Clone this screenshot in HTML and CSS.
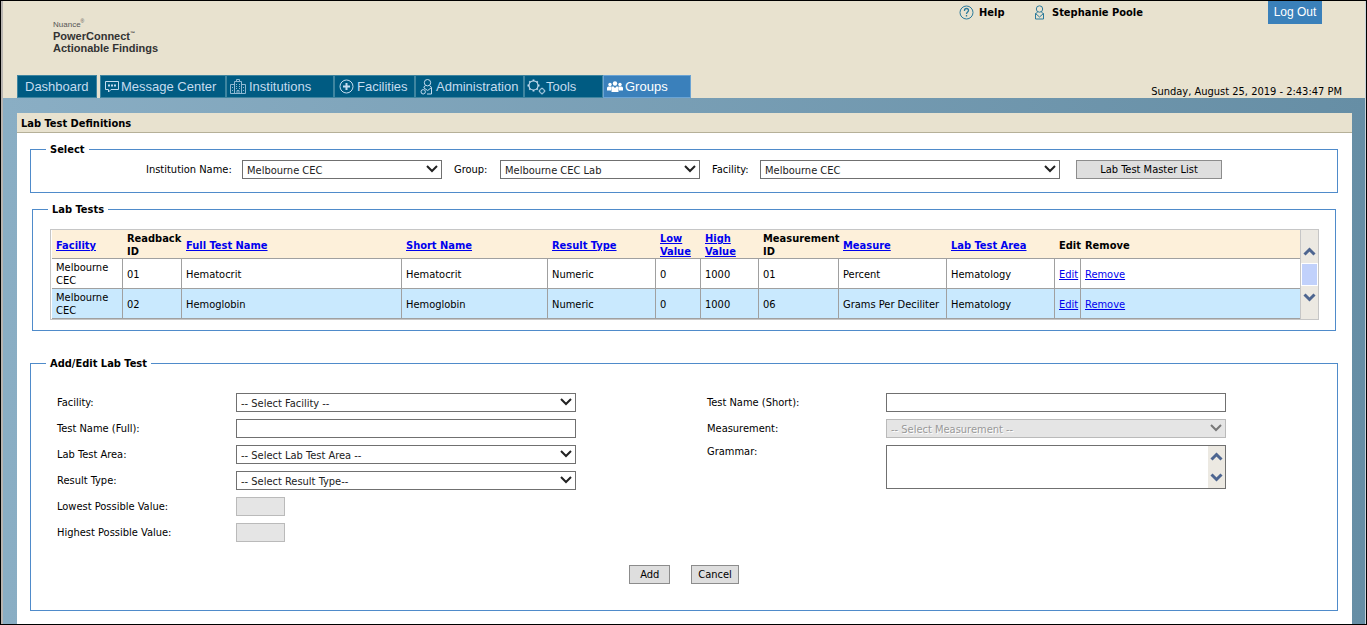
FILE: index.html
```html
<!DOCTYPE html>
<html lang="en">
<head>
<meta charset="utf-8">
<title>Lab Test Definitions</title>
<link rel="stylesheet" href="styles.css">
</head>
<body>
<div class="page">
  <header class="header">
    <div class="topbar">
      <div class="logo">
        <span class="logo-brand">Nuance<sup>®</sup></span>
        <span class="logo-name">PowerConnect<sup>™</sup></span>
        <span class="logo-name">Actionable Findings</span>
      </div>
      <div class="account">
        <a class="account-link account-help" href="#">
          <svg width="15" height="15" viewBox="0 0 15 15" fill="none" stroke="#2b7a9b"><circle cx="7.500" cy="7.500" r="6.500"/><path d="M5.500 6V5.500a2 2 0 0 1 4 0C9.500 7 7.500 7 7.500 9M7.500 10v1.500" stroke-width="1.300"/></svg>
          Help
        </a>
        <a class="account-link account-user" href="#">
          <svg width="11" height="15" viewBox="0 0 11 15" fill="none" stroke="#2b7a9b"><circle cx="5.500" cy="4" r="3.200"/><path d="M3.500 7.500 1.500 8.500v5.500h8V8.500l-2-1M1.500 8.500l4 3.500 4-3.500"/></svg>
          Stephanie Poole
        </a>
        <button class="logout" type="button">Log Out</button>
      </div>
    </div>
    <div class="navbar">
      <nav class="tabs">
        <a class="tab tab-dashboard" href="#">Dashboard</a>
        <a class="tab tab-messages" href="#">
          <svg width="15" height="13" viewBox="0 0 15 13" fill="none" stroke="currentColor"><path d="M.5 1.500h13v8H6l-2.500 2.500V9.500h-3z"/><path d="M3 5.500h2M6 5.500h2M9 5.500h2" stroke-width="1.800"/></svg>
          Message Center</a>
        <a class="tab tab-institutions" href="#">
          <svg width="16" height="15" viewBox="0 0 16 15" fill="none" stroke="#8fb9d2"><path d="M4.500 14.500v-12h7v12M6.500 2.500v-2h3v2M4.500 5.500h-4v9h15v-9h-4M7 14.500v-3h2v3M6 5.500h1M9 5.500h1M6 7.500h1M9 7.500h1M6 9.500h1M9 9.500h1M2 8.500h1M2 11.500h1M13 8.500h1M13 11.500h1"/></svg>
          Institutions</a>
        <a class="tab tab-facilities" href="#">
          <svg width="15" height="15" viewBox="0 0 15 15" fill="none" stroke="currentColor"><circle cx="7.500" cy="7.500" r="6.500"/><path d="M7.500 4v7M4 7.500h7" stroke-width="2"/></svg>
          Facilities</a>
        <a class="tab tab-admin" href="#">
          <svg width="13" height="16" viewBox="0 0 13 16" fill="none" stroke="currentColor"><circle cx="7.500" cy="3.700" r="3.200"/><path d="M5.500 6.700 4 7.700v1.300l3.700 2.500 3.800-3v6.500H7M9.500 6.700l2 1.500"/><circle cx="3.200" cy="12.800" r="2.200"/></svg>
          Administration</a>
        <a class="tab tab-tools" href="#">
          <svg width="19" height="16" viewBox="0 0 19 16" fill="none" stroke="currentColor"><circle cx="6.500" cy="6.500" r="4.500" stroke-width="1.200"/><path d="M6.500 .5V2M6.500 11v1.500M.5 6.500H2M11 6.500h1.500M2.300 2.300l1 1M9.700 9.700l1 1M2.300 10.700l1-1M9.700 3.300l1-1" stroke-width="1.800"/><circle cx="15" cy="12" r="2.400"/><path d="M15 8.700v1M15 14.500v1M11.700 12h1M17.400 12h1"/></svg>
          Tools</a>
        <a class="tab tab-groups tab-active" href="#" aria-current="page">
          <svg width="16" height="12" viewBox="0 0 16 12" fill="currentColor"><circle cx="3" cy="3.500" r="1.700"/><circle cx="13" cy="3.500" r="1.700"/><circle cx="8" cy="2.500" r="2.200"/><path d="M0 9.500V7q0-1.500 1.500-1.500h3L4 9.500zM16 9.500V7q0-1.500-1.500-1.500h-3l.5 4zM4.500 11V7q0-1.700 1.700-1.700L8 7l1.800-1.700q1.700 0 1.700 1.700v4z"/></svg>
          Groups</a>
      </nav>
      <time class="clock" datetime="2019-08-25T14:43:47">Sunday, August 25, 2019 - 2:43:47 PM</time>
    </div>
  </header>

  <main class="stage">
    <div class="panel">
      <h1 class="panel-title">Lab Test Definitions</h1>
      <div class="panel-body">
        <fieldset class="group group-select">
          <legend>Select</legend>
          <div class="filters">
            <label class="filter-label label-institution" for="institution">Institution Name:</label>
            <select class="control select filter-control" id="institution"><option>Melbourne CEC</option></select>
            <label class="filter-label label-group" for="group">Group:</label>
            <select class="control select filter-control" id="group"><option>Melbourne CEC Lab</option></select>
            <label class="filter-label label-facility" for="facility">Facility:</label>
            <select class="control select filter-control filter-wide" id="facility"><option>Melbourne CEC</option></select>
            <button class="button button-master" type="button">Lab Test Master List</button>
          </div>
        </fieldset>

        <fieldset class="group group-tests">
          <legend>Lab Tests</legend>
          <div class="table-box">
            <div class="table-area">
              <table class="tests">
                <colgroup>
                  <col class="col-facility"><col class="col-readback"><col class="col-full"><col class="col-short"><col class="col-type"><col class="col-low"><col class="col-high"><col class="col-mid"><col class="col-measure"><col class="col-area"><col class="col-edit"><col>
                </colgroup>
                <thead>
                  <tr>
                    <th><a href="#">Facility</a></th>
                    <th>Readback<br>ID</th>
                    <th><a href="#">Full Test Name</a></th>
                    <th><a href="#">Short Name</a></th>
                    <th><a href="#">Result Type</a></th>
                    <th><a href="#">Low<br>Value</a></th>
                    <th><a href="#">High<br>Value</a></th>
                    <th>Measurement<br>ID</th>
                    <th><a href="#">Measure</a></th>
                    <th><a href="#">Lab Test Area</a></th>
                    <th>Edit</th>
                    <th>Remove</th>
                  </tr>
                </thead>
                <tbody>
                  <tr>
                    <td>Melbourne<br>CEC</td><td>01</td><td>Hematocrit</td><td>Hematocrit</td><td>Numeric</td><td>0</td><td>1000</td><td>01</td><td>Percent</td><td>Hematology</td><td><a href="#">Edit</a></td><td><a href="#">Remove</a></td>
                  </tr>
                  <tr>
                    <td>Melbourne<br>CEC</td><td>02</td><td>Hemoglobin</td><td>Hemoglobin</td><td>Numeric</td><td>0</td><td>1000</td><td>06</td><td>Grams Per Deciliter</td><td>Hematology</td><td><a href="#">Edit</a></td><td><a href="#">Remove</a></td>
                  </tr>
                </tbody>
              </table>
            </div>
            <div class="scroll scroll-table">
              <svg width="14" height="9" viewBox="0 0 14 9" fill="none" stroke="#4d6590" stroke-width="3"><path d="m1.500 7.500 5-5 5 5"/></svg>
              <span class="scroll-thumb"></span>
              <svg width="14" height="9" viewBox="0 0 14 9" fill="none" stroke="#4d6590" stroke-width="3"><path d="m1.500 1.500 5 5 5-5"/></svg>
            </div>
          </div>
        </fieldset>

        <fieldset class="group group-edit">
          <legend>Add/Edit Lab Test</legend>
          <form class="edit-form">
            <div class="columns">
              <div class="fields">
                <label for="f-facility">Facility:</label>
                <select class="control select" id="f-facility"><option>-- Select Facility --</option></select>
                <label for="f-full">Test Name (Full):</label>
                <input class="control" id="f-full" type="text">
                <label for="f-area">Lab Test Area:</label>
                <select class="control select" id="f-area"><option>-- Select Lab Test Area --</option></select>
                <label for="f-type">Result Type:</label>
                <select class="control select" id="f-type"><option>-- Select Result Type--</option></select>
                <label for="f-low">Lowest Possible Value:</label>
                <input class="control control-small" id="f-low" type="text" disabled>
                <label for="f-high">Highest Possible Value:</label>
                <input class="control control-small" id="f-high" type="text" disabled>
              </div>
              <div class="fields">
                <label for="f-short">Test Name (Short):</label>
                <input class="control" id="f-short" type="text">
                <label for="f-measure">Measurement:</label>
                <select class="control select" id="f-measure" disabled><option>-- Select Measurement --</option></select>
                <label class="label-top" for="f-grammar">Grammar:</label>
                <div class="grammar">
                  <textarea class="grammar-text" id="f-grammar"></textarea>
                  <div class="scroll">
                    <svg width="14" height="9" viewBox="0 0 14 9" fill="none" stroke="#4d6590" stroke-width="3"><path d="m1.500 7.500 5-5 5 5"/></svg>
                    <svg width="14" height="9" viewBox="0 0 14 9" fill="none" stroke="#4d6590" stroke-width="3"><path d="m1.500 1.500 5 5 5-5"/></svg>
                  </div>
                </div>
              </div>
            </div>
            <div class="actions">
              <button class="button" type="button">Add</button>
              <button class="button button-cancel" type="button">Cancel</button>
            </div>
          </form>
        </fieldset>
      </div>
    </div>
  </main>
</div>
</body>
</html>
```
FILE: styles.css
```css
* {
  box-sizing: border-box;
}

body {
  margin: 0;
  color: #000;
  font: 11px/13px "DejaVu Sans Condensed", "Noto Sans", sans-serif;
}

button, input, select, textarea {
  font: inherit;
  color: inherit;
}

a {
  color: #0000ee;
}

.page {
  display: flex;
  flex-direction: column;
  min-height: 100vh;
  border: 1px solid #000;
}

.header {
  display: flex;
  flex-direction: column;
  justify-content: space-between;
  min-height: 97px;
  border-left: 2px solid #b9b5b1;
  border-right: 1px solid #c9d3da;
  background: #e8e2cf;
}

.topbar, .navbar {
  display: flex;
  justify-content: space-between;
}

.logo {
  display: flex;
  flex-direction: column;
  padding: 18px 0 0 50px;
  color: #333;
  font-family: "Liberation Sans", Arial, sans-serif;
}

.logo sup {
  font-size: 5px;
  line-height: 1px;
}

.logo-brand {
  font-size: 8px;
  line-height: 11px;
  color: #555;
}

.logo-name {
  font-size: 11px;
  font-weight: bold;
  line-height: 12px;
}

.account {
  display: flex;
  align-items: flex-start;
  padding-right: 43px;
}

.account-link {
  display: flex;
  align-items: center;
  gap: 5px;
  color: #000;
  font-weight: bold;
  text-decoration: none;
}

.account-help {
  width: 75px;
  padding-top: 4px;
}

.account-user {
  width: 234px;
  gap: 7px;
  padding-top: 4px;
}

.logout {
  width: 54px;
  height: 23px;
  padding: 0;
  border: 0;
  background: #3a80ba;
  color: #fff;
  font: 12px/23px "Liberation Sans", Arial, sans-serif;
}

.tabs {
  display: flex;
  padding-left: 14px;
}

.tab {
  display: flex;
  align-items: center;
  gap: 3px;
  height: 23px;
  padding: 0 4px;
  border: 1px solid #3f85a0;
  background: #005b82;
  color: #c5dcef;
  font: 13px/21px "Liberation Sans", Arial, sans-serif;
  text-decoration: none;
  white-space: nowrap;
}

.tab-dashboard { width: 80px; margin-right: 3px; padding: 0 7px; }
.tab-messages { width: 126px; gap: 1px; }
.tab-institutions { width: 108px; padding: 0 3px; }
.tab-facilities { width: 81px; }
.tab-admin { width: 109px; }
.tab-tools { width: 79px; gap: 0; padding: 0 2px; }
.tab-groups { width: 88px; gap: 2px; padding: 0 3px; }

.tab-active {
  border-color: #6ba4d4;
  background: #3a80bb;
  color: #fff;
}

.clock {
  align-self: flex-end;
  padding-right: 23px;
}

.stage {
  flex: 1;
  display: flex;
  flex-direction: column;
  padding: 15px 13px 0 14px;
  border-left: 2px solid #b9b5b1;
  border-right: 1px solid #c9d3da;
  background: linear-gradient(90deg, #8aaec4, #668ea5);
}

.panel {
  flex: 1;
  background: #fff;
}

.panel-title {
  margin: 0;
  padding: 4px 5px 2px 4px;
  border-bottom: 1px solid #b5b098;
  background: #e8e2cf;
  font-size: 11px;
  line-height: 13px;
}

.panel-body {
  padding: 10px 14px 13px 13px;
}

.group {
  min-width: 0;
  margin: 0;
  padding: 0;
  border: 1px solid #4f8bca;
}

.group legend {
  margin-left: 15px;
  padding: 0 4px;
  font-weight: bold;
}

.filters {
  display: flex;
  align-items: center;
  gap: 12px;
  padding: 4px 0 13px 115px;
}

.filter-label { white-space: nowrap; }
.label-institution { width: 84px; }
.label-group { width: 34px; }
.label-facility { width: 36px; }
.filter-control { width: 200px; }
.filter-wide { width: 300px; }

.control {
  height: 19px;
  padding: 1px 4px 0;
  border: 1px solid #707070;
  border-radius: 0;
  background-color: #fff;
  color: #222;
}

.select {
  appearance: none;
  background-image: url("data:image/svg+xml,%3Csvg xmlns='http://www.w3.org/2000/svg' width='12' height='8' fill='none' stroke='%23222' stroke-width='2'%3E%3Cpath d='m1 1 5 5 5-5'/%3E%3C/svg%3E");
  background-repeat: no-repeat;
  background-position: right 3px top 4px;
}

.control:disabled {
  border-color: #bababa;
  background-color: #e5e5e5;
  color: #999;
  opacity: 1;
}

.select:disabled {
  background-image: url("data:image/svg+xml,%3Csvg xmlns='http://www.w3.org/2000/svg' width='12' height='8' fill='none' stroke='%23777' stroke-width='2'%3E%3Cpath d='m1 1 5 5 5-5'/%3E%3C/svg%3E");
  text-shadow: 1px 1px 0 #fff;
}

.control-small {
  width: 49px;
}

.button {
  height: 19px;
  padding: 0 10px;
  border: 1px solid #8c8c8c;
  background: #dedede;
  color: #000;
}

.button-master {
  width: 146px;
  margin-left: 4px;
}

.group-tests {
  margin: 10px 2px 26px;
}

.table-box {
  display: flex;
  margin: 13px 16px 10px 17px;
  border: 1px solid #c6c6c6;
  padding-left: 1px;
}

.table-area {
  flex: 1;
  min-width: 0;
}

.tests {
  width: 100%;
  table-layout: fixed;
  border-spacing: 0;
}

.tests th, .tests td {
  height: 30px;
  padding: 1px 0 0 4px;
  border-bottom: 1px solid #a0a0a0;
  text-align: left;
  vertical-align: middle;
  white-space: nowrap;
}

.tests th {
  height: 29px;
  padding-top: 2px;
  background: #fdf0da;
  line-height: 13px;
}

.tests td { border-right: 1px solid #a0a0a0; }
.tests tbody tr:nth-child(2) { background: #c9e9fe; }
.tests td:last-child { border-right: 0; }

.col-facility { width: 71px; }
.col-readback { width: 59px; }
.col-full { width: 220px; }
.col-short { width: 146px; }
.col-type, .col-measure, .col-area { width: 108px; }
.col-low { width: 45px; }
.col-high { width: 58px; }
.col-mid { width: 80px; }
.col-edit { width: 26px; }

.scroll {
  display: flex;
  flex-direction: column;
  align-items: center;
  justify-content: space-between;
  width: 17px;
  padding: 6px 0;
  background: #ece9e2;
}

.scroll-table {
  width: 18px;
  padding: 17px 0;
  border-left: 1px solid #c6c6c6;
}

.scroll-thumb {
  width: 17px;
  height: 23px;
  border: 1px solid #fff;
  background: #c1d1fb;
}

.columns {
  display: flex;
  gap: 131px;
  padding: 23px 26px;
}

.fields {
  display: grid;
  grid-template-columns: 179px 340px;
  grid-auto-rows: min-content;
  align-items: center;
  gap: 7px 0;
}

.label-top { align-self: start; }

.grammar {
  display: flex;
  height: 44px;
  border: 1px solid #707070;
}

.grammar-text {
  flex: 1;
  padding: 2px 4px;
  border: 0;
  resize: none;
  overflow: hidden;
}

.actions {
  display: flex;
  justify-content: center;
  gap: 21px;
  padding-bottom: 26px;
}

.button-cancel { padding: 0 6px; }
```
